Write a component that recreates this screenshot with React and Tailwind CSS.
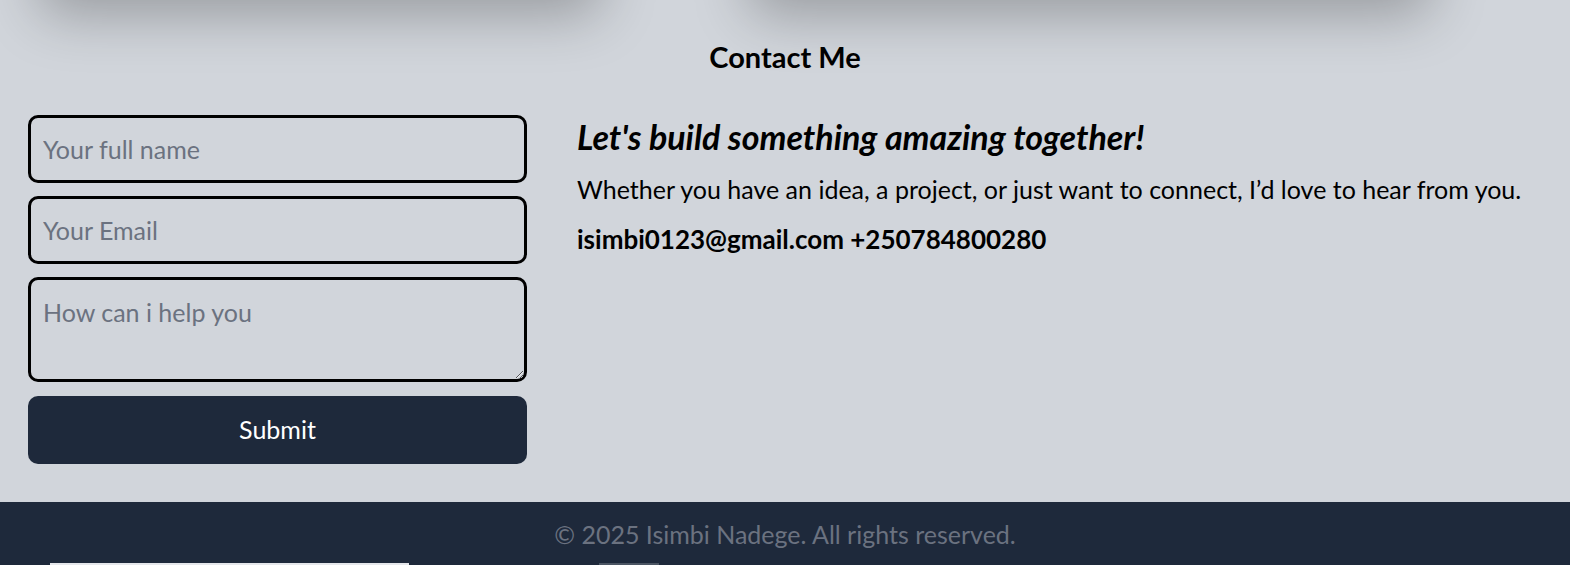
export default function App() {
  return (
    <div className="min-h-[565px] bg-[#d1d5db] text-black overflow-hidden" style={{ fontFamily: "Lato, 'Noto Sans', sans-serif" }}>
      <div className="flex gap-[150px] px-[40px] h-[300px] -mt-[300px]">
        <div className="w-[560px] h-full rounded-xl bg-[#d1d5db] shadow-[0_14px_56px_rgba(0,0,0,0.28)]" />
        <div className="w-[680px] h-full rounded-xl bg-[#d1d5db] shadow-[0_14px_56px_rgba(0,0,0,0.28)]" />
      </div>
      <section className="px-[28px] pt-[38px] pb-[38px]">
        <h2 className="text-center text-[29px] leading-[38px] font-bold">Contact Me</h2>
        <div className="mt-[39px] flex gap-[50px]">
          <form className="w-[499px] shrink-0 flex flex-col gap-[13px]">
            <input
              placeholder="Your full name"
              className="h-[68px] w-full rounded-[10px] border-[3px] border-black bg-transparent px-[12px] text-[25px] placeholder:text-[#6b7280] outline-none"
            />
            <input
              placeholder="Your Email"
              className="h-[68px] w-full rounded-[10px] border-[3px] border-black bg-transparent px-[12px] text-[25px] placeholder:text-[#6b7280] outline-none"
            />
            <textarea
              placeholder="How can i help you"
              className="h-[105px] w-full rounded-[10px] border-[3px] border-black bg-transparent px-[12px] pt-[16px] text-[25px] leading-[32px] placeholder:text-[#6b7280] outline-none"
            />
            <button type="button" className="mt-[1px] h-[68px] w-full rounded-[10px] bg-[#1e293b] text-white text-[25px]">
              Submit
            </button>
          </form>
          <div className="pt-[2px]">
            <h3 className="text-[34px] leading-[40px] font-bold italic">Let's build something amazing together!</h3>
            <p className="mt-[16px] text-[25px] leading-[32px]">
              Whether you have an idea, a project, or just want to connect, I’d love to hear from you.
            </p>
            <p className="mt-[18px] text-[26px] leading-[32px] font-bold">isimbi0123@gmail.com +250784800280</p>
          </div>
        </div>
      </section>
      <footer className="bg-[#1e293b] pt-[16px]">
        <p className="text-center text-[25px] leading-[32px] text-[#6b7280]">© 2025 Isimbi Nadege. All rights reserved.</p>
        <div className="mt-[13px] flex h-[10px] items-start">
          <div className="ml-[50px] h-[10px] w-[359px] bg-[#e5e7eb]" />
          <div className="ml-[190px] h-[10px] w-[60px] bg-[#4b5563]" />
        </div>
      </footer>
    </div>
  );
}
